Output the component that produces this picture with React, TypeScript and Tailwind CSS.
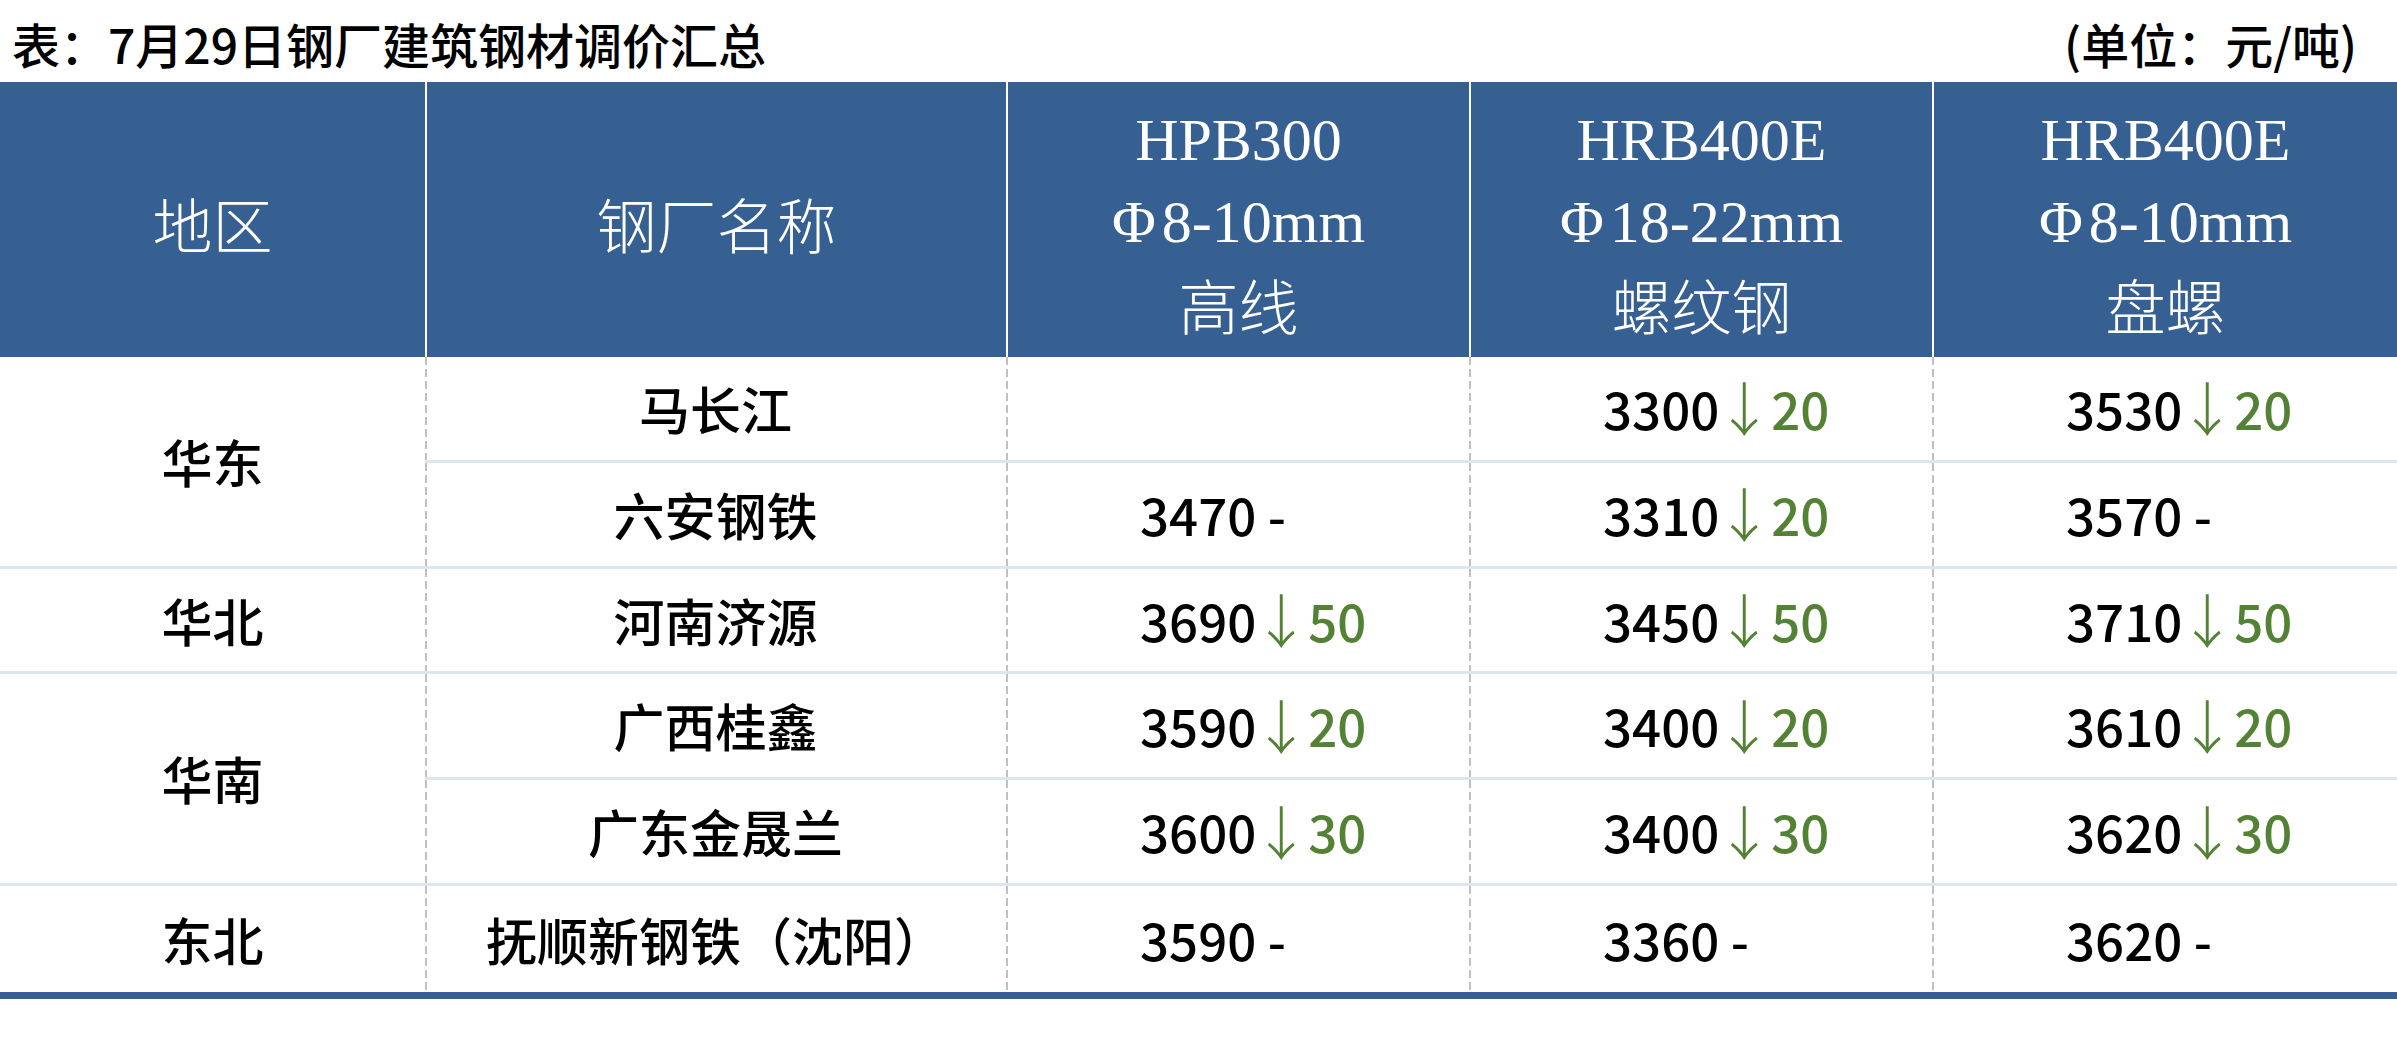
import React from "react";

type Price = { v: string; d?: string } | null;
type Row = { region?: string; span?: number; mill: string; p: Price[] };

const rows: Row[] = [
  { region: "华东", span: 2, mill: "马长江", p: [null, { v: "3300", d: "20" }, { v: "3530", d: "20" }] },
  { mill: "六安钢铁", p: [{ v: "3470" }, { v: "3310", d: "20" }, { v: "3570" }] },
  { region: "华北", span: 1, mill: "河南济源", p: [{ v: "3690", d: "50" }, { v: "3450", d: "50" }, { v: "3710", d: "50" }] },
  { region: "华南", span: 2, mill: "广西桂鑫", p: [{ v: "3590", d: "20" }, { v: "3400", d: "20" }, { v: "3610", d: "20" }] },
  { mill: "广东金晟兰", p: [{ v: "3600", d: "30" }, { v: "3400", d: "30" }, { v: "3620", d: "30" }] },
  { region: "东北", span: 1, mill: "抚顺新钢铁（沈阳）", p: [{ v: "3590" }, { v: "3360" }, { v: "3620" }] },
];

const sans = "font-['Noto_Sans_CJK_SC','Noto_Sans',sans-serif]";
const dash =
  "bg-[linear-gradient(to_bottom,#c0c0c0_8px,transparent_8px)] bg-[length:2px_12px] bg-repeat-y bg-[position:0_0]";

function PriceCell({ p, last }: { p: Price; last: boolean }) {
  return (
    <div
      className={`flex items-center pl-[134px] ${dash} ${last ? "" : "border-b-[3px] border-[#dce6f1]"}`}
    >
      {p && (
        <span className="flex items-center whitespace-nowrap text-black">
          <span>{p.v}</span>
          {p.d ? (
            <>
              <span className="inline-flex w-[52px] justify-center pr-[2px] text-[#548235] text-[58px] font-light leading-none -translate-y-[2px]">
                ↓
              </span>
              <span className="text-[#548235]">{p.d}</span>
            </>
          ) : (
            <span className="whitespace-pre"> -</span>
          )}
        </span>
      )}
    </div>
  );
}

export default function App() {
  return (
    <div className={`w-[2397px] h-[1056px] bg-white overflow-hidden ${sans}`}>
      <div className="h-[82px] flex items-center justify-between pl-[12px] pr-[40px] pt-[4px] text-[48px] leading-none text-black font-medium">
        <span>表：7月29日钢厂建筑钢材调价汇总</span>
        <span>(单位：元/吨)</span>
      </div>

      <div className="grid grid-cols-[425px_581px_463px_463px_1fr] h-[275px] bg-[#366092] text-white text-[60px] font-['Liberation_Serif','Noto_Sans_CJK_SC',serif]">
        <div className="flex items-center justify-center pt-[6px]">
          <span className="font-['Noto_Sans_CJK_SC',sans-serif] font-light">地区</span>
        </div>
        <div className="flex items-center justify-center border-l-2 border-white pt-[6px]">
          <span className="font-['Noto_Sans_CJK_SC',sans-serif] font-light">钢厂名称</span>
        </div>
        {[
          ["HPB300", "8-10mm", "高线"],
          ["HRB400E", "18-22mm", "螺纹钢"],
          ["HRB400E", "8-10mm", "盘螺"],
        ].map(([a, b, c], i) => (
          <div key={i} className="flex flex-col items-center justify-center border-l-2 border-white pt-[4px]">
            <span className="leading-[82px]">{a}</span>
            <span className="leading-[82px]">
              <span className="mr-[6px]">Φ</span>
              {b}
            </span>
            <span className="leading-[82px] font-['Noto_Sans_CJK_SC',sans-serif] font-light">{c}</span>
          </div>
        ))}
      </div>

      <div className="grid grid-cols-[425px_581px_463px_463px_1fr] grid-rows-[repeat(6,105.83px)] border-b-[7px] border-[#366092] text-[51px] leading-none font-medium">
        {rows.map((r, i) => {
          const last = i === rows.length - 1;
          return (
            <React.Fragment key={i}>
              {r.region && (
                <div
                  className={`flex items-center justify-center text-black ${r.span === 2 ? "row-span-2" : ""} ${
                    last ? "" : "border-b-[3px] border-[#dce6f1]"
                  }`}
                >
                  {r.region}
                </div>
              )}
              <div
                className={`flex items-center justify-center text-black ${dash} ${
                  last ? "" : "border-b-[3px] border-[#dce6f1]"
                }`}
              >
                {r.mill}
              </div>
              {r.p.map((p, j) => (
                <PriceCell key={j} p={p} last={last} />
              ))}
            </React.Fragment>
          );
        })}
      </div>
    </div>
  );
}
